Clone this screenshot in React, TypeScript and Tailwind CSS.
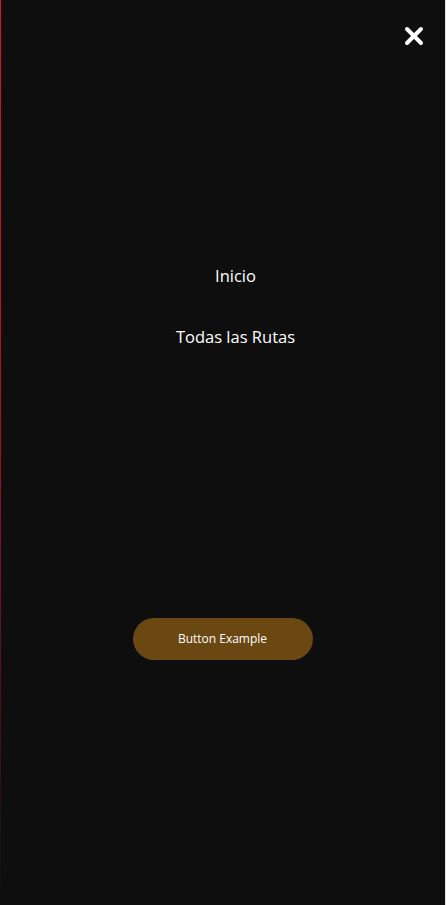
export default function App() {
  return (
    <div className="min-h-screen w-full bg-[#e5e5e5]">
      <div
        className="relative flex h-[905px] w-[445px] flex-col bg-[#0e0e0e]"
        style={{ fontFamily: '"Open Sans", "Noto Sans", sans-serif' }}
      >
        <div className="absolute left-0 top-0 h-full w-px bg-gradient-to-b from-[#e0102a] via-[#a0102a] to-transparent" />
        <div className="flex justify-end px-[21px] pt-[26px]">
          <button className="text-white">
            <svg width="20" height="20" viewBox="0 0 20 20" fill="none">
              <path d="M3 3L17 17M17 3L3 17" stroke="white" strokeWidth="4" strokeLinecap="round" />
            </svg>
          </button>
        </div>
        <nav className="mt-[218px] flex flex-col items-center gap-[37px] pl-[26px] text-[16.5px] text-white">
          <a className="leading-6">Inicio</a>
          <a className="leading-6">Todas las Rutas</a>
        </nav>
        <div className="mt-[269px] flex justify-center">
          <button className="h-[42px] w-[180px] rounded-full bg-[#6b4712] text-[12px] text-white">
            Button Example
          </button>
        </div>
      </div>
    </div>
  );
}
